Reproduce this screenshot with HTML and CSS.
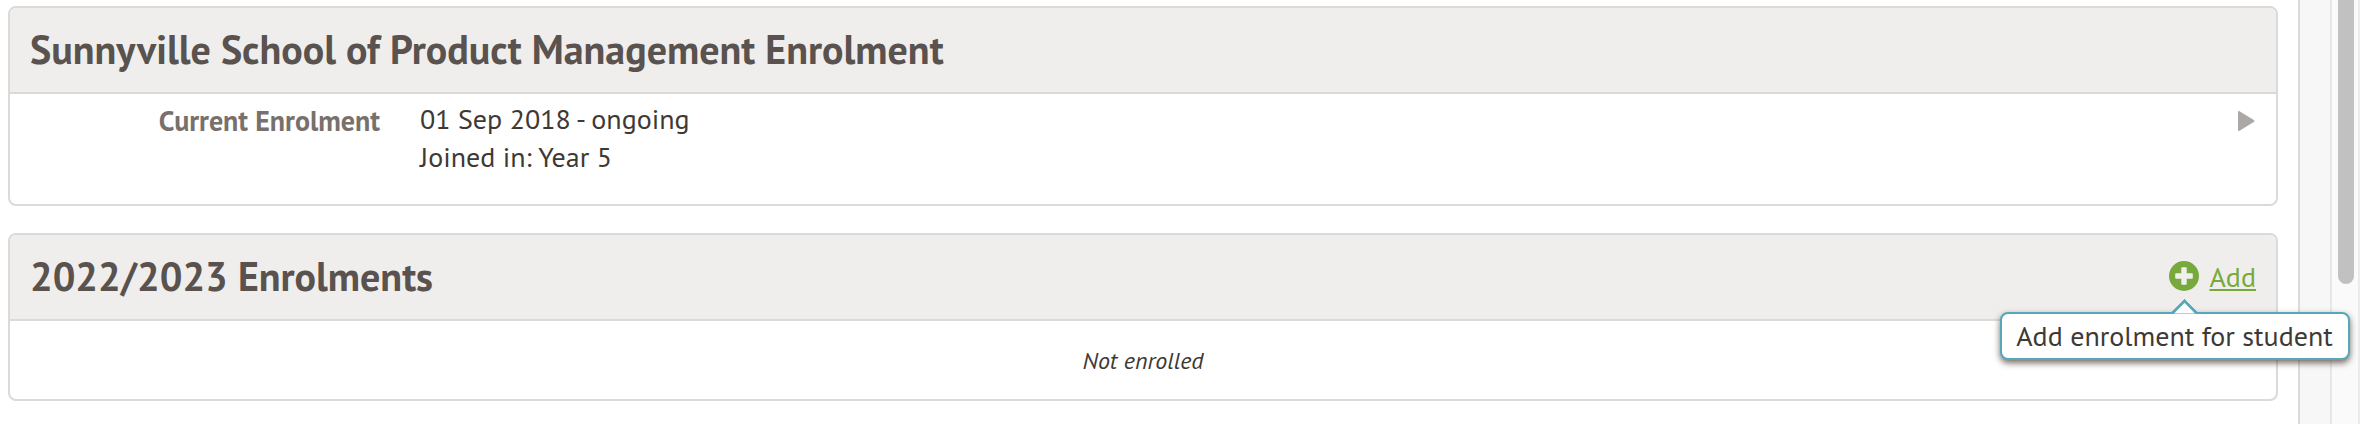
FILE: index.html
```
<!DOCTYPE html>
<html lang="en">

<head>
    <meta charset="UTF-8">
    <meta name="viewport" content="width=device-width, initial-scale=1.0">
    <title>Enrolments</title>
    <link rel="stylesheet" href="styles.css">
</head>

<body>
    <div class="page">
        <main class="content">
            <section class="card">
                <header class="card-header">
                    <h2>Sunnyville School of Product Management Enrolment</h2>
                </header>
                <div class="card-body details">
                    <div class="label">Current Enrolment</div>
                    <div class="value">
                        <p>01 Sep 2018 - ongoing</p>
                        <p>Joined in: Year 5</p>
                    </div>
                    <svg class="arrow" width="17" height="20" viewBox="0 0 17 20">
                        <path d="M0 1Q0-.5 1.5.3L15.8 9Q17 10 15.8 11L1.5 19.7Q0 20.5 0 19Z" fill="#aca8a6"/>
                    </svg>
                </div>
            </section>

            <section class="card">
                <header class="card-header">
                    <h2>2022/2023 Enrolments</h2>
                    <div class="add">
                        <svg class="add-icon" width="30" height="30" viewBox="0 0 30 30">
                            <circle cx="15" cy="15" r="15" fill="#78a93c"/>
                            <g fill="#f0efed">
                                <rect x="12.3" y="6.2" width="5.4" height="17.6" rx="1"/>
                                <rect x="6.2" y="12.3" width="17.6" height="5.4" rx="1"/>
                            </g>
                        </svg>
                        <a href="#">Add</a>
                        <div class="tooltip">Add enrolment for student</div>
                    </div>
                </header>
                <div class="card-body empty"><em>Not enrolled</em></div>
            </section>
        </main>
        <aside class="gutter"></aside>
        <div class="scrollbar">
            <div class="thumb"></div>
        </div>
    </div>
</body>

</html>
```
FILE: styles.css
```
* {
    margin: 0;
    padding: 0;
    box-sizing: border-box;
}

body {
    font-family: "PT Sans", Lato, sans-serif;
    font-size: 28px;
    line-height: 38px;
    color: #3e3935;
    background-color: #fff;
    overflow: hidden;
}

.page {
    display: flex;
    height: 424px;
}

.content {
    width: 2300px;
    padding: 6px 20px 0 8px;
    border-right: 2px solid #dcdbda;
}

/* Cards */
.card {
    height: 200px;
    margin-bottom: 27px;
    border: 2px solid #dbdad9;
    border-radius: 8px;
}

.card + .card {
    height: 168px;
}

.card-header {
    display: flex;
    align-items: center;
    justify-content: space-between;
    height: 86px;
    padding: 0 20px 2px;
    background-color: #efeeec;
    border-bottom: 2px solid #dbdad9;
    border-radius: 6px 6px 0 0;
}

h2 {
    font-size: 40px;
    color: #59524e;
}

.details {
    display: flex;
    padding: 6px 21px 0 0;
}

.label {
    width: 370px;
    padding-top: 2px;
    text-align: right;
    font-weight: bold;
    color: #78706c;
}

.value {
    flex: 1;
    padding-left: 40px;
}

.arrow {
    margin-top: 11px;
}

.empty {
    display: flex;
    align-items: center;
    justify-content: center;
    height: 78px;
    padding-top: 2px;
    font-size: 24px;
}

/* Add link */
.add {
    position: relative;
    display: flex;
    align-items: center;
    gap: 10px;
}

.add a {
    padding-top: 2px;
    color: #78a93c;
    text-decoration-thickness: 2px;
    text-underline-offset: 2px;
    text-decoration-skip-ink: none;
}

.tooltip {
    position: absolute;
    top: 56px;
    right: -94px;
    width: 350px;
    height: 48px;
    padding-right: 1px;
    line-height: 44px;
    text-align: center;
    white-space: nowrap;
    background-color: #fff;
    border: 2px solid #56a7bb;
    border-radius: 8px;
    box-shadow: 0 3px 6px rgba(62, 45, 35, 0.7);
}

.tooltip::before {
    content: "";
    position: absolute;
    top: -11px;
    left: 172px;
    width: 18px;
    height: 18px;
    background: linear-gradient(135deg, #fff 50%, transparent 50%);
    border: solid #56a7bb;
    border-width: 3px 0 0 3px;
    transform: rotate(45deg);
    clip-path: polygon(0 0, 100% 0, 0 100%);
}

/* Right side */
.gutter {
    width: 32px;
    background-color: #f7f7f7;
    border-right: 2px solid #e7e7e7;
}

.scrollbar {
    width: 28px;
    padding-left: 6px;
    background-color: #fafafa;
    border-right: 2px solid #ebebeb;
}

.thumb {
    width: 16px;
    height: 284px;
    background-color: #c1c1c1;
    border-radius: 0 0 8px 8px;
}
```
